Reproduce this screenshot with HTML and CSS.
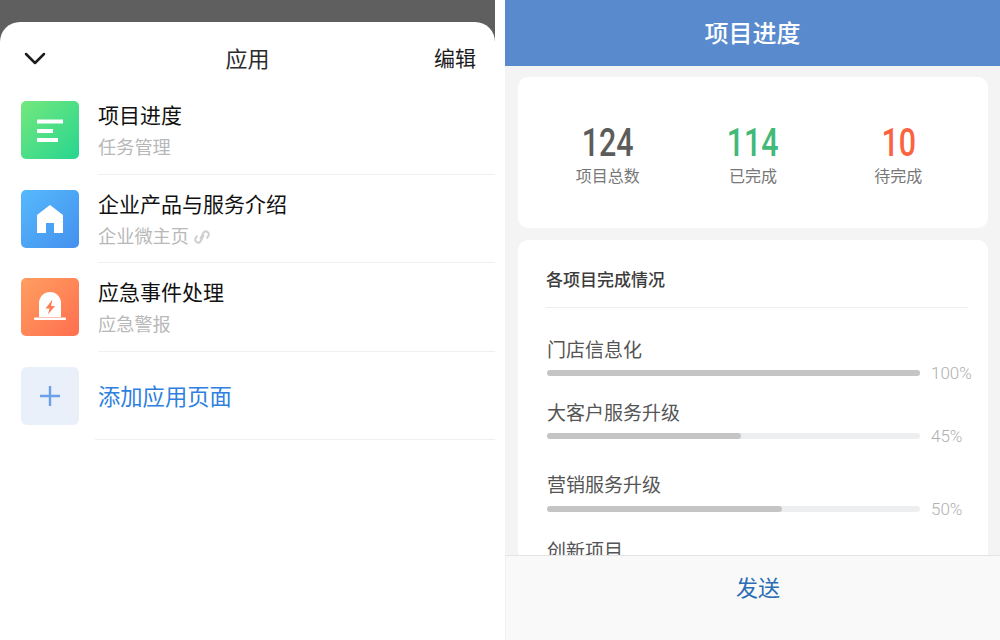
FILE: index.html
```html
<!DOCTYPE html>
<html lang="zh-CN">
<head>
    <meta charset="UTF-8">
    <meta name="viewport" content="width=device-width, initial-scale=1.0">
    <title>应用</title>
    <link rel="stylesheet" href="styles.css">
</head>
<body>
    <div class="screen">

        <!-- Left: app picker sheet -->
        <div class="picker">
            <div class="sheet">
                <div class="sheet-head">
                    <svg class="chevron" width="22" height="13" viewBox="0 0 22 13">
                        <path d="M2 2l9 9 9-9" fill="none" stroke="#1c1c1e" stroke-width="2.5" stroke-linecap="round" stroke-linejoin="round"/>
                    </svg>
                    <div class="sheet-title">应用</div>
                    <div class="sheet-edit">编辑</div>
                </div>

                <div class="app-row">
                    <svg class="app-icon" width="58" height="58" viewBox="0 0 58 58">
                        <defs>
                            <linearGradient id="greenTile" x1="0" y1="0" x2="1" y2="1">
                                <stop offset="0" stop-color="#74e87d"/>
                                <stop offset="1" stop-color="#27d590"/>
                            </linearGradient>
                        </defs>
                        <rect width="58" height="58" rx="5" fill="url(#greenTile)"/>
                        <rect x="16" y="18.5" width="26" height="4" fill="#fff"/>
                        <rect x="16" y="28" width="16" height="4" fill="#fff"/>
                        <rect x="16" y="37" width="21" height="4" fill="#fff"/>
                    </svg>
                    <div class="app-text">
                        <div class="app-name">项目进度</div>
                        <div class="app-sub">任务管理</div>
                    </div>
                </div>

                <div class="app-row">
                    <svg class="app-icon" width="58" height="58" viewBox="0 0 58 58">
                        <defs>
                            <linearGradient id="blueTile" x1="0" y1="0" x2="1" y2="1">
                                <stop offset="0" stop-color="#56b9fc"/>
                                <stop offset="1" stop-color="#4490ee"/>
                            </linearGradient>
                        </defs>
                        <rect width="58" height="58" rx="5" fill="url(#blueTile)"/>
                        <path d="M29 15l12.4 9.6q.6.5.6 1.2V43H33V33h-8v10h-9V25.800q0-.7.6-1.200z" fill="#fff"/>
                    </svg>
                    <div class="app-text">
                        <div class="app-name">企业产品与服务介绍</div>
                        <div class="app-sub">企业微主页<svg class="link-icon" width="16" height="16" viewBox="0 0 16 16">
                                <path d="M6.500 9.500l3-6a3 3 0 0 1 5 3.200l-1.500 2.100" fill="none" stroke="#cfcfcf" stroke-width="2" stroke-linecap="round"/>
                                <path d="M9.500 6.500l-3 6a3 3 0 0 1-5-3.200l1.500-2.100" fill="none" stroke="#cfcfcf" stroke-width="2" stroke-linecap="round"/>
                            </svg></div>
                    </div>
                </div>

                <div class="app-row">
                    <svg class="app-icon" width="58" height="58" viewBox="0 0 58 58">
                        <defs>
                            <linearGradient id="orangeTile" x1="0" y1="0" x2="1" y2="1">
                                <stop offset="0" stop-color="#ff9e60"/>
                                <stop offset="1" stop-color="#ff6f4f"/>
                            </linearGradient>
                        </defs>
                        <rect width="58" height="58" rx="5" fill="url(#orangeTile)"/>
                        <path d="M18 39V25a11 11 0 0 1 22 0v14z" fill="#fff"/>
                        <rect x="13" y="39.500" width="32" height="2.500" rx="1" fill="#fff"/>
                        <path d="M31.500 21.500l-7 9h4l-1.500 6 7-8.500h-4z" fill="#ff7d55"/>
                    </svg>
                    <div class="app-text">
                        <div class="app-name">应急事件处理</div>
                        <div class="app-sub">应急警报</div>
                    </div>
                </div>

                <div class="app-row">
                    <div class="add-tile">
                        <svg width="22" height="22" viewBox="0 0 22 22">
                            <path d="M11 1v20M1 11h20" stroke="#6aa0ea" stroke-width="2.400" fill="none"/>
                        </svg>
                    </div>
                    <div class="add-label">添加应用页面</div>
                </div>
            </div>
        </div>

        <!-- Right: progress page -->
        <div class="progress-page">
            <div class="page-head">项目进度</div>

            <div class="page-body">
                <div class="card stats-card">
                    <div class="stat">
                        <div class="stat-num">124</div>
                        <div class="stat-label">项目总数</div>
                    </div>
                    <div class="stat">
                        <div class="stat-num stat-done">114</div>
                        <div class="stat-label">已完成</div>
                    </div>
                    <div class="stat">
                        <div class="stat-num stat-todo">10</div>
                        <div class="stat-label">待完成</div>
                    </div>
                </div>

                <div class="card list-card">
                    <div class="list-title">各项目完成情况</div>

                    <div class="bar-row bar-row-first">
                        <div class="bar-name">门店信息化</div>
                        <div class="bar-line">
                            <div class="bar-track"><div class="bar-fill" style="width: 100%"></div></div>
                            <div class="bar-pct">100%</div>
                        </div>
                    </div>
                    <div class="bar-row">
                        <div class="bar-name">大客户服务升级</div>
                        <div class="bar-line">
                            <div class="bar-track"><div class="bar-fill" style="width: 52%"></div></div>
                            <div class="bar-pct">45%</div>
                        </div>
                    </div>
                    <div class="bar-row bar-row-wide">
                        <div class="bar-name">营销服务升级</div>
                        <div class="bar-line bar-line-low">
                            <div class="bar-track"><div class="bar-fill" style="width: 63%"></div></div>
                            <div class="bar-pct">50%</div>
                        </div>
                    </div>
                    <div class="bar-row bar-row-last">
                        <div class="bar-name">创新项目</div>
                    </div>
                </div>
            </div>

            <div class="page-foot">发送</div>
        </div>
    </div>
</body>
</html>
```

FILE: styles.css
```css
* {
    box-sizing: border-box;
}

html, body {
    margin: 0;
    height: 100%;
    overflow: hidden;
}

body {
    font-family: "Noto Sans CJK SC", "Noto Sans", sans-serif;
    background-color: #fff;
}

.screen {
    display: flex;
    height: 640px;
}

/* left panel */
.picker {
    flex: 0 0 495px;
    margin-right: 10px;
    padding-top: 22px;
    background-color: #5f5f5f;
}

.sheet {
    height: 618px;
    background: white;
    border-radius: 20px 20px 0 0;
}

.sheet-head {
    display: flex;
    align-items: center;
    justify-content: space-between;
    height: 64px;
    padding: 8px 19px 0 24px;
    position: relative;
}

.sheet-title {
    position: absolute;
    left: 0;
    right: 0;
    text-align: center;
    font-size: 22px;
    line-height: 30px;
    margin-top: -3px;
    color: #2b2b2d;
}

.sheet-edit {
    font-size: 21px;
    line-height: 30px;
    margin-top: -3px;
    color: #1c1c1e;
}

.app-row {
    display: flex;
    align-items: center;
    height: 88.500px;
    padding-left: 21px;
}

.app-icon {
    flex-shrink: 0;
}

.app-text {
    flex: 1;
    align-self: stretch;
    display: flex;
    flex-direction: column;
    justify-content: center;
    margin-left: 19px;
    border-bottom: 1px solid #f0f0f0;
}

.app-name {
    font-size: 21px;
    line-height: 30px;
    color: #111;
}

.app-sub {
    font-size: 18.200px;
    line-height: 28px;
    margin-top: 3px;
    color: #b8b8b8;
}

.link-icon {
    vertical-align: -2px;
    margin-left: 5px;
}

.add-tile {
    flex-shrink: 0;
    display: flex;
    align-items: center;
    justify-content: center;
    width: 58px;
    height: 58px;
    border-radius: 6px;
    background-color: #e9f0fa;
}

.add-label {
    flex: 1;
    align-self: stretch;
    display: flex;
    align-items: center;
    margin-left: 16px;
    padding-left: 3px;
    font-size: 22.300px;
    color: #2f7fe0;
    border-bottom: 1px solid #f0f0f0;
}

/* right panel */
.progress-page {
    flex: 1;
    min-width: 0;
    display: flex;
    flex-direction: column;
    background-color: #f4f4f4;
}

.page-head {
    flex-shrink: 0;
    height: 66px;
    line-height: 64px;
    text-align: center;
    font-size: 24px;
    font-weight: 500;
    color: white;
    background-color: #5a8ace;
}

.page-body {
    flex: 1;
    min-height: 0;
    overflow: hidden;
    padding: 11px 12px 0 13px;
}

.card {
    background: white;
    border-radius: 10px;
}

.stats-card {
    display: flex;
    align-items: center;
    height: 151px;
    margin-bottom: 12px;
    padding: 0 17px;
}

.stat {
    flex: 1;
    text-align: center;
}

.stat-num {
    font-family: Roboto, sans-serif;
    font-size: 38px;
    font-weight: 500;
    line-height: 44px;
    margin-top: 2px;
    margin-bottom: -2px;
    color: #5c5c5c;
    transform: scaleX(0.8);
}

.stat-done {
    color: #41b978;
}

.stat-todo {
    color: #fb6340;
}

.stat-label {
    font-size: 16px;
    line-height: 24px;
    color: #777;
}

.list-card {
    padding: 0 20px 0 28px;
}

.list-title {
    height: 68px;
    line-height: 78px;
    font-size: 17px;
    font-weight: 500;
    color: #3c3c3c;
    border-bottom: 1px solid #eee;
}

.bar-row {
    margin-top: 17px;
    padding-left: 1px;
}

.bar-row-first {
    margin-top: 27px;
}

.bar-row-wide {
    margin-top: 26px;
}

.bar-row-last {
    margin-top: 20px;
}

.bar-name {
    font-size: 19px;
    line-height: 28px;
    color: #555;
}

.bar-line {
    display: flex;
    align-items: center;
    height: 16px;
    margin-top: 2px;
}

.bar-line-low {
    margin-top: 3px;
    margin-bottom: -1px;
}

.bar-track {
    flex: 0 0 373px;
    height: 6px;
    border-radius: 3px;
    background-color: #eceeef;
}

.bar-fill {
    height: 100%;
    border-radius: 3px;
    background-color: #c5c5c5;
}

.bar-pct {
    margin-left: 11px;
    font-family: Roboto, sans-serif;
    font-size: 17px;
    font-weight: 300;
    white-space: nowrap;
    color: #b0b0b0;
}

.page-foot {
    flex-shrink: 0;
    height: 85px;
    padding: 0 0 24px 10px;
    display: flex;
    align-items: center;
    justify-content: center;
    font-size: 22px;
    color: #2a6db5;
    background-color: #f9f9f9;
    border-top: 1px solid #e4e4e4;
    border-left: 1px solid #f0f0f0;
}
```
